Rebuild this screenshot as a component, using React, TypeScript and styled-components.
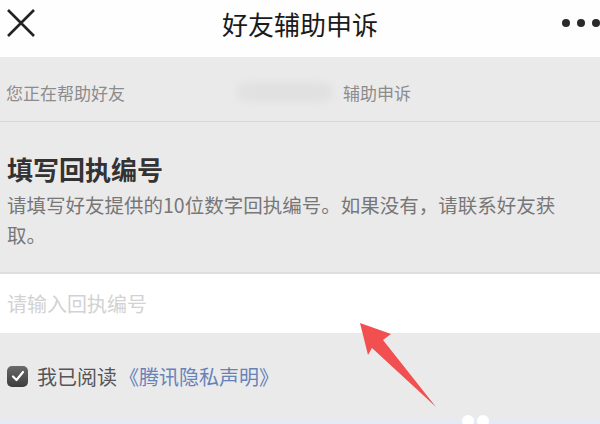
import React from 'react';
import styled, { createGlobalStyle } from 'styled-components';

const GlobalStyle = createGlobalStyle`
  html, body {
    margin: 0;
    padding: 0;
    background: #ebeaeb;
  }
  body {
    font-family: 'Noto Sans CJK SC', 'Noto Sans', sans-serif;
  }
`;

const App = () => {
  return (
    <Page>
      <GlobalStyle />
      <NavBar>
        <IconButton aria-label="close">
          <svg width="30" height="30" viewBox="0 0 30 30">
            <path d="M2 2 L28 28 M28 2 L2 28" stroke="#222" strokeWidth="2.6" fill="none" />
          </svg>
        </IconButton>
        <Title>好友辅助申诉</Title>
        <MoreDots>
          <Dot />
          <Dot />
          <Dot />
        </MoreDots>
      </NavBar>

      <HelpRow>
        <span>您正在帮助好友</span>
        <Blurred />
        <span>辅助申诉</span>
      </HelpRow>

      <Section>
        <Heading>填写回执编号</Heading>
        <Description>请填写好友提供的10位数字回执编号。如果没有，请联系好友获取。</Description>
      </Section>

      <InputRow>
        <CodeInput placeholder="请输入回执编号" />
      </InputRow>

      <AgreeRow>
        <CheckBox>
          <svg width="14" height="14" viewBox="0 0 14 14">
            <path d="M2 7.5 L5.5 11 L12 3" stroke="#fff" strokeWidth="2.2" fill="none" strokeLinecap="round" strokeLinejoin="round" />
          </svg>
        </CheckBox>
        <AgreeText>我已阅读</AgreeText>
        <PolicyLink>《腾讯隐私声明》</PolicyLink>
      </AgreeRow>

      <BottomStrip>
        <Bump />
        <Bump />
      </BottomStrip>

      {/* annotation arrow drawn over the screenshot */}
      <Arrow width="600" height="424" viewBox="0 0 600 424">
        <polygon
          points="360,323 391,334 383,340 436,407 372,348 368,355"
          fill="#f25050"
        />
      </Arrow>
    </Page>
  );
};

const Page = styled.div`
  position: relative;
  width: 600px;
  height: 424px;
  overflow: hidden;
  background: #ebeaeb;
  display: flex;
  flex-direction: column;
`;

const NavBar = styled.header`
  height: 57px;
  flex: none;
  background: #fefefe;
  display: flex;
  align-items: center;
  justify-content: space-between;
  padding: 0 0 0 6px;
  position: relative;
`;

const IconButton = styled.div`
  width: 30px;
  height: 30px;
  margin-top: -12px;
  display: flex;
`;

const Title = styled.div`
  position: absolute;
  left: 0;
  right: 0;
  top: 5px;
  text-align: center;
  font-size: 26px;
  color: #1a1a1a;
  pointer-events: none;
`;

const MoreDots = styled.div`
  display: flex;
  gap: 7px;
  margin-top: -11px;
`;

const Dot = styled.span`
  width: 8px;
  height: 8px;
  border-radius: 50%;
  background: #2a2a2a;
`;

const HelpRow = styled.div`
  height: 65px;
  flex: none;
  box-sizing: border-box;
  border-bottom: 1px solid #d8d8d8;
  display: flex;
  align-items: center;
  padding: 6px 0 0 6px;
  font-size: 17px;
  color: #8c8c8c;
`;

const Blurred = styled.span`
  width: 96px;
  height: 20px;
  margin: 0 10px 0 112px;
  border-radius: 10px;
  background: #e1e1e1;
  filter: blur(3px);
`;

const Section = styled.section`
  flex: none;
  height: 150px;
  box-sizing: border-box;
  padding: 29px 10px 0 7px;
`;

const Heading = styled.h1`
  margin: 0;
  font-size: 26px;
  line-height: 36px;
  font-weight: 700;
  color: #333;
`;

const Description = styled.p`
  margin: 3px 0 0;
  font-size: 19.5px;
  line-height: 30px;
  color: #777;
`;

const InputRow = styled.div`
  flex: none;
  height: 61px;
  box-sizing: border-box;
  border-top: 2px solid #dfdfdf;
  background: #fff;
  display: flex;
  align-items: center;
`;

const CodeInput = styled.input`
  border: none;
  outline: none;
  background: transparent;
  width: 100%;
  padding: 0 7px;
  font-family: inherit;
  font-size: 20px;
  color: #333;
  &::placeholder {
    color: #d2d2d2;
  }
`;

const AgreeRow = styled.div`
  flex: none;
  height: 86px;
  display: flex;
  align-items: center;
  padding-left: 7px;
  font-size: 20px;
`;

const CheckBox = styled.span`
  width: 21px;
  height: 21px;
  border-radius: 5px;
  background: linear-gradient(#6a6a6a, #3c3c3c);
  display: flex;
  align-items: center;
  justify-content: center;
  margin-right: 9px;
`;

const AgreeText = styled.span`
  color: #555;
`;

const PolicyLink = styled.a`
  color: #6683b8;
  margin-left: 2px;
`;

const BottomStrip = styled.div`
  flex: 1;
  background: #e4ebf6;
  display: flex;
  gap: 3px;
  padding-left: 462px;
`;

const Bump = styled.span`
  width: 12px;
  height: 12px;
  margin-top: -4px;
  border-radius: 50%;
  background: #fff;
`;

const Arrow = styled.svg`
  position: absolute;
  left: 0;
  top: 0;
  pointer-events: none;
`;

export default App;
